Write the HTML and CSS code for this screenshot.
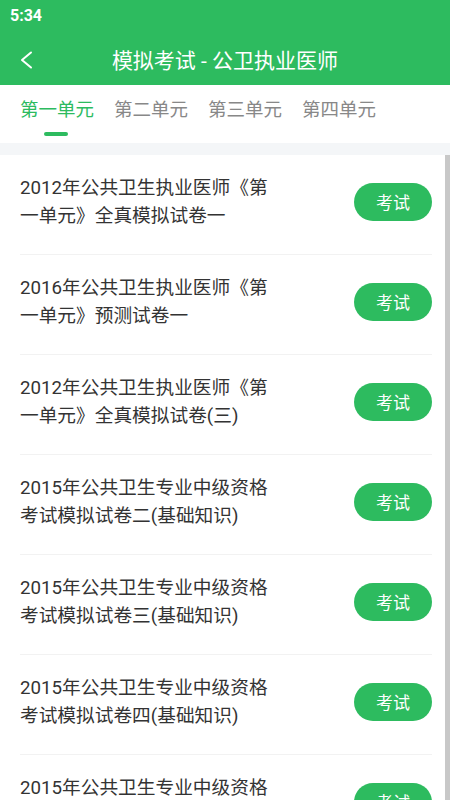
FILE: index.html
```html
<!DOCTYPE html>
<html lang="zh-CN">
<head>
  <meta charset="UTF-8">
  <meta name="viewport" content="width=device-width, initial-scale=1.0">
  <title>模拟考试 - 公卫执业医师</title>
  <link rel="stylesheet" href="styles.css">
</head>
<body>

  <!-- Status bar + header -->
  <div class="status-bar">5:34</div>
  <header class="top-bar">
    <a class="back" href="#">
      <svg width="14" height="18" viewBox="0 0 14 18"><path d="M12 1.5 L3 9 L12 16.5" fill="none" stroke="#fff" stroke-width="2" stroke-linecap="round" stroke-linejoin="round"/></svg>
    </a>
    <h1>模拟考试 - 公卫执业医师</h1>
  </header>

  <!-- Tabs -->
  <nav class="tabs">
    <a class="tab active" href="#">第一单元</a>
    <a class="tab" href="#">第二单元</a>
    <a class="tab" href="#">第三单元</a>
    <a class="tab" href="#">第四单元</a>
  </nav>
  <div class="gap"></div>

  <!-- Exam list -->
  <div class="list-wrap">
    <ul class="exam-list">
      <li class="exam">
        <p class="exam-title">2012年公共卫生执业医师《第一单元》全真模拟试卷一</p>
        <button class="exam-btn">考试</button>
      </li>
      <li class="exam">
        <p class="exam-title">2016年公共卫生执业医师《第一单元》预测试卷一</p>
        <button class="exam-btn">考试</button>
      </li>
      <li class="exam">
        <p class="exam-title">2012年公共卫生执业医师《第一单元》全真模拟试卷(三)</p>
        <button class="exam-btn">考试</button>
      </li>
      <li class="exam">
        <p class="exam-title">2015年公共卫生专业中级资格考试模拟试卷二(基础知识)</p>
        <button class="exam-btn">考试</button>
      </li>
      <li class="exam">
        <p class="exam-title">2015年公共卫生专业中级资格考试模拟试卷三(基础知识)</p>
        <button class="exam-btn">考试</button>
      </li>
      <li class="exam">
        <p class="exam-title">2015年公共卫生专业中级资格考试模拟试卷四(基础知识)</p>
        <button class="exam-btn">考试</button>
      </li>
      <li class="exam">
        <p class="exam-title">2015年公共卫生专业中级资格考试模拟试卷五(基础知识)</p>
        <button class="exam-btn">考试</button>
      </li>
    </ul>
    <div class="scrollbar"></div>
  </div>

</body>
</html>
```

FILE: styles.css
```css
* {
  margin: 0;
  padding: 0;
  box-sizing: border-box;
}

body {
  font-family: Roboto, "Noto Sans CJK SC", sans-serif;
  background: #fff;
  color: #333;
  width: 450px;
  height: 800px;
  overflow: hidden;
}

/* Status bar + header */
.status-bar {
  background: #2dbb5f;
  color: #fff;
  font-size: 16px;
  font-weight: 700;
  height: 32px;
  line-height: 32px;
  padding-left: 10px;
}

.top-bar {
  position: relative;
  background: #2dbb5f;
  height: 53px;
  display: flex;
  align-items: center;
  justify-content: center;
}

.top-bar h1 {
  color: #fff;
  font-size: 21px;
  font-weight: 400;
}

.back {
  position: absolute;
  left: 19px;
  top: 19px;
  display: flex;
}

/* Tabs */
.tabs {
  display: flex;
  gap: 20px;
  height: 58px;
  padding-left: 20px;
}

.tab {
  position: relative;
  color: #888;
  font-size: 18.5px;
  text-decoration: none;
  line-height: 50px;
}

.tab.active {
  color: #2dbb5f;
}

.tab.active::after {
  content: "";
  position: absolute;
  left: 24px;
  top: 47px;
  width: 24px;
  height: 4px;
  border-radius: 2px;
  background: #2dbb5f;
}

.gap {
  height: 12px;
  background: #f4f6f8;
}

/* Exam list */
.list-wrap {
  position: relative;
}

.exam-list {
  list-style: none;
  padding: 0 18px 0 20px;
}

.exam {
  display: flex;
  align-items: center;
  justify-content: space-between;
  height: 100px;
  border-bottom: 1px solid #f2f2f2;
  padding-bottom: 6px;
}

.exam-title {
  width: 262px;
  font-size: 18.7px;
  line-height: 28px;
  color: #333;
}

.exam-btn {
  width: 78px;
  height: 38px;
  border: none;
  border-radius: 19px;
  background: #2dbb5f;
  color: #fff;
  font-family: inherit;
  font-size: 17px;
}

.scrollbar {
  position: absolute;
  top: 0;
  right: 0;
  width: 5px;
  height: 660px;
  background: #c8c8c8;
}
```
